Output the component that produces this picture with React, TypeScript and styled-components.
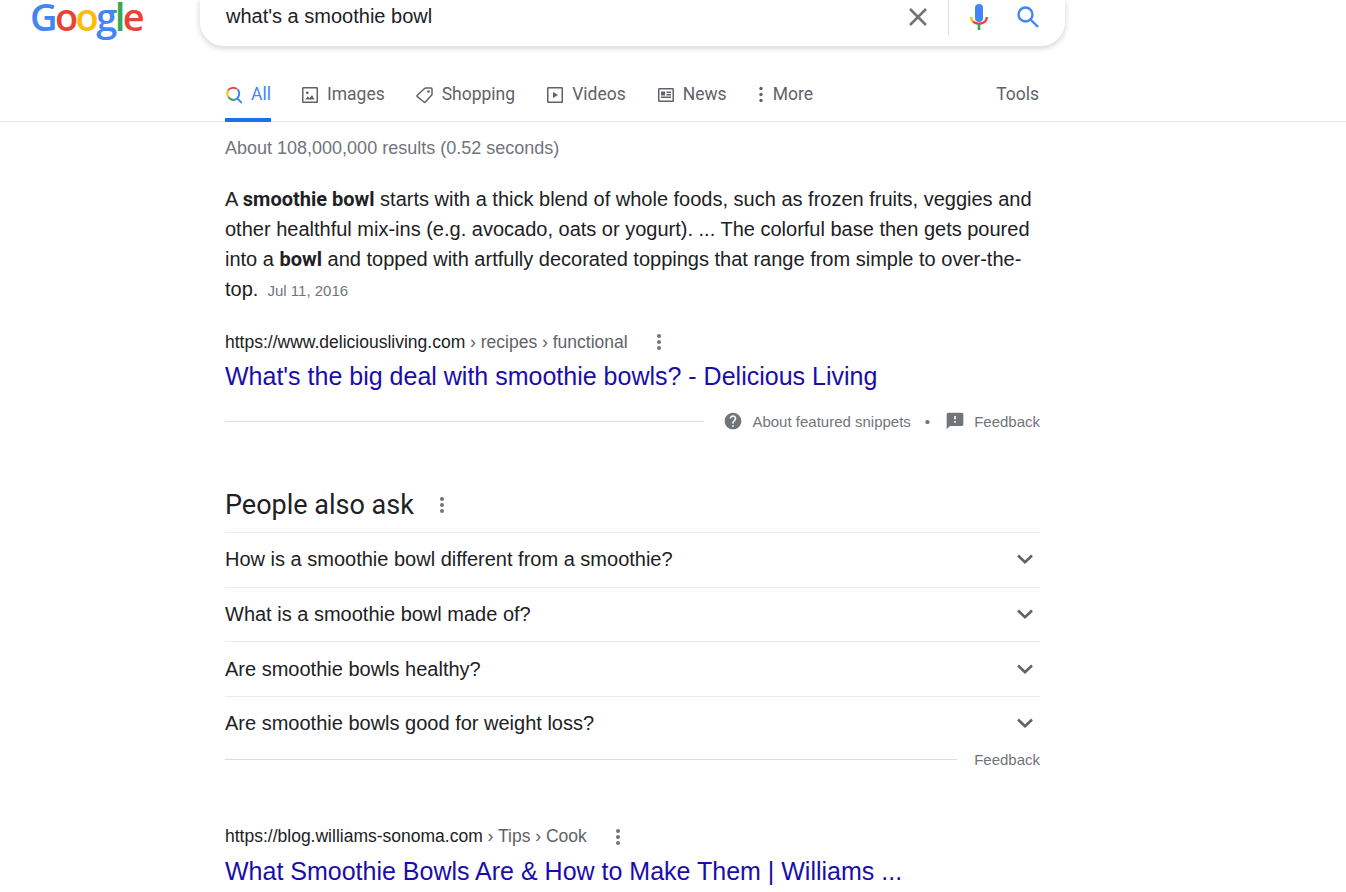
import React from "react";
import styled, { createGlobalStyle } from "styled-components";

const Global = createGlobalStyle`
  html, body { margin: 0; padding: 0; height: 892px; overflow: hidden; background: #fff; }
  body { font-family: "Liberation Sans", Arial, sans-serif; color: #202124; }
  * { box-sizing: border-box; }
`;

const Page = styled.div`
  width: 1346px;
  height: 892px;
  overflow: hidden;
`;

const Header = styled.header`
  display: flex;
  height: 46px;
  align-items: flex-start;
  padding-left: 30px;
`;

const Logo = styled.div`
  width: 170px;
  height: 46px;
  margin-top: -2px;
  font-family: "Open Sans", Lato, sans-serif;
  font-size: 38px;
  line-height: 36px;
  letter-spacing: -2.6px;
  font-weight: 600;
  white-space: nowrap;
`;

const LogoLetter = styled.span<{ $c: string }>`
  color: ${(p) => p.$c};
`;

const SearchBox = styled.div`
  width: 865px;
  height: 46px;
  display: flex;
  align-items: flex-start;
  padding: 0 26px;
  background: #fff;
  border-radius: 0 0 24px 24px;
  box-shadow: 0 2px 5px 1px rgba(64, 60, 67, 0.18);
  clip-path: inset(0 -12px -12px -12px);
`;

const Query = styled.div`
  flex: 1;
  font-size: 20px;
  line-height: 24px;
  padding-top: 4px;
  color: #202124;
`;

const SearchIcons = styled.div`
  display: flex;
  align-items: flex-start;
  height: 35px;
`;

const ClearIcon = styled.svg`
  display: block;
  margin-top: 8px;
`;

const Sep = styled.span`
  width: 1px;
  height: 35px;
  background: #dfe1e5;
  margin: 0 21px 0 21px;
`;

const MicIcon = styled.svg`
  display: block;
  margin-top: 4px;
`;

const LensIcon = styled.svg`
  display: block;
  margin: 6px 0 0 29px;
`;

const TabBar = styled.nav`
  display: flex;
  height: 76px;
  padding: 30px 307px 0 225px;
  border-bottom: 1px solid #ebebeb;
  font-family: Roboto, "Liberation Sans", sans-serif;
  font-size: 17.5px;
  color: #5f6368;
`;

const Tab = styled.div<{ $active?: boolean; $gap?: number; $mr?: number }>`
  display: flex;
  align-items: flex-start;
  gap: ${(p) => p.$gap ?? 8}px;
  height: 46px;
  padding-top: 7px;
  line-height: 22px;
  margin-right: ${(p) => p.$mr ?? 31}px;
  white-space: nowrap;
  color: ${(p) => (p.$active ? "#4285f4" : "#5f6368")};
  border-bottom: 4px solid ${(p) => (p.$active ? "#1a73e8" : "transparent")};
  svg { flex: none; margin-top: 3px; }
`;

const Tools = styled.div`
  margin-left: auto;
  padding-top: 7px;
  line-height: 22px;
`;

const Main = styled.main`
  width: 815px;
  margin-left: 225px;
`;

const Stats = styled.div`
  font-size: 18px;
  line-height: 22px;
  margin-top: 15px;
  color: #70757a;
`;

const Snippet = styled.p`
  margin: 25px 0 0;
  font-size: 20px;
  line-height: 30px;
  color: #202124;
  width: 812px;
  b { font-family: Roboto, "Liberation Sans", sans-serif; font-weight: 700; }
`;

const SnippetDate = styled.span`
  font-size: 15px;
  color: #70757a;
  margin-left: 5px;
`;

const UrlRow = styled.div<{ $top: number }>`
  display: flex;
  align-items: center;
  height: 22px;
  margin-top: ${(p) => p.$top}px;
  font-size: 17.5px;
  color: #5f6368;
  white-space: nowrap;
`;

const Host = styled.span`
  color: #202124;
`;

const More = styled.span<{ $left: number }>`
  display: inline-flex;
  margin-left: ${(p) => p.$left}px;
`;

const ResultTitle = styled.a`
  display: block;
  font-size: 25px;
  line-height: 33px;
  margin-top: 7px;
  color: #1a0dab;
  white-space: nowrap;
`;

const FootRow = styled.div<{ $top: number }>`
  display: flex;
  align-items: center;
  height: 22px;
  margin-top: ${(p) => p.$top}px;
  font-size: 15px;
  color: #70757a;
`;

const FootLine = styled.div`
  flex: 1;
  height: 1px;
  background: #dadce0;
`;

const FootItem = styled.span<{ $left: number }>`
  display: inline-flex;
  align-items: center;
  margin-left: ${(p) => p.$left}px;
`;

const FootIcon = styled.svg<{ $right: number }>`
  display: block;
  margin-right: ${(p) => p.$right}px;
`;

const AskHead = styled.h2`
  display: flex;
  align-items: center;
  height: 36px;
  margin: 54px 0 10px;
  padding-top: 1px;
  font-family: Roboto, "Liberation Sans", sans-serif;
  font-size: 27px;
  font-weight: 400;
  color: #202124;
`;

const AskRow = styled.div`
  display: flex;
  align-items: center;
  justify-content: space-between;
  height: 54.7px;
  border-top: 1px solid #ebebeb;
  font-size: 20px;
  color: #202124;
  padding-right: 7px;
`;

const ChevronIcon = styled.svg`
  display: block;
  margin-top: -1px;
`;

const Chevron = () => (
  <ChevronIcon width="16" height="10" viewBox="0 0 16 10" fill="none" stroke="#5f6368" strokeWidth="2.600">
    <path d="M1 1.500 8 8.200 15 1.500" />
  </ChevronIcon>
);

const Dots = () => (
  <svg width="6" height="18" viewBox="0 0 6 18" fill="#70757a">
    <circle cx="3" cy="3" r="2" />
    <circle cx="3" cy="9" r="2" />
    <circle cx="3" cy="15" r="2" />
  </svg>
);

const rows = [
  "How is a smoothie bowl different from a smoothie?",
  "What is a smoothie bowl made of?",
  "Are smoothie bowls healthy?",
  "Are smoothie bowls good for weight loss?",
];

export default function App() {
  return (
    <Page>
      <Global />
      <Header>
        <Logo aria-label="Google">
          <LogoLetter $c="#4285f4">G</LogoLetter>
          <LogoLetter $c="#ea4335">o</LogoLetter>
          <LogoLetter $c="#fbbc05">o</LogoLetter>
          <LogoLetter $c="#4285f4">g</LogoLetter>
          <LogoLetter $c="#34a853">l</LogoLetter>
          <LogoLetter $c="#ea4335">e</LogoLetter>
        </Logo>
        <SearchBox>
          <Query>what's a smoothie bowl</Query>
          <SearchIcons>
            <ClearIcon width="18" height="18" viewBox="0 0 18 18" stroke="#70757a" strokeWidth="2.600" fill="none">
              <path d="M1 1 17 17M17 1 1 17" />
            </ClearIcon>
            <Sep />
            <MicIcon width="18" height="26" viewBox="0 0 18 26" fill="none">
              <rect x="5" y="0" width="8" height="18" rx="4" fill="#4285f4" />
              <path d="M1.200 13c0 2.200.6 3.700 2 4.900" stroke="#fbbc05" strokeWidth="2.400" />
              <path d="M3 17.700c1.500 1.300 3.600 2 6 2s4.500-.7 6-2c1.300-1.200 1.800-2.700 1.800-4.700" stroke="#ea4335" strokeWidth="2.400" />
              <path d="M9 20v6" stroke="#34a853" strokeWidth="2.600" />
            </MicIcon>
            <LensIcon width="22" height="22" viewBox="0 0 22 22" fill="none" stroke="#4285f4" strokeWidth="2.400">
              <circle cx="8.500" cy="8.500" r="7" />
              <path d="m13.500 13.500 7.500 7.500" />
            </LensIcon>
          </SearchIcons>
        </SearchBox>
      </Header>

      <TabBar>
        <Tab $active $mr={30}>
          <svg width="18" height="18" viewBox="0 0 18 18" fill="none" strokeWidth="1.800">
            <path d="M12 3A6.500 6.500 0 0 0 3 4.500" stroke="#ea4335" />
            <path d="M3.200 4.300a6.500 6.500 0 0 0 0 6.500" stroke="#fbbc05" />
            <path d="M3.200 10.800A6.500 6.500 0 0 0 9 14" stroke="#34a853" />
            <path d="M9 14a6.500 6.500 0 0 0 3.500-10.800" stroke="#4285f4" />
            <path d="m11.800 12 5 5" stroke="#4285f4" />
          </svg>
          All
        </Tab>
        <Tab>
          <svg width="18" height="18" viewBox="0 0 18 18" fill="#5f6368">
            <path d="M15.700 1H2.300C1.600 1 1 1.600 1 2.300v13.400c0 .7.600 1.300 1.300 1.300h13.400c.7 0 1.300-.6 1.300-1.300V2.300C17 1.600 16.400 1 15.700 1zm-.2 14.500h-13v-13h13v13z" />
            <path d="m11 9-2.500 3.200-1.700-2L4.500 13.500h9zM6.300 8.200a1.400 1.400 0 1 0 0-2.800 1.400 1.400 0 0 0 0 2.800z" />
          </svg>
          Images
        </Tab>
        <Tab>
          <svg width="18" height="18" viewBox="0 0 18 18" fill="none" stroke="#5f6368" strokeWidth="1.500" strokeLinejoin="round">
            <path d="M1.300 9.200 8.800 2.300c.3-.2.600-.3.900-.3H15c.6 0 1 .4 1 1v5.300c0 .3-.1.600-.3.800L9.300 16c-.4.400-1 .400-1.400 0L1.300 10.600c-.4-.4-.4-1 0-1.400z" />
            <circle cx="12.500" cy="5.500" r="1.300" fill="#5f6368" stroke="none" />
          </svg>
          Shopping
        </Tab>
        <Tab>
          <svg width="18" height="18" viewBox="0 0 18 18" fill="#5f6368">
            <path d="M2.300 1h13.400c.7 0 1.300.6 1.300 1.300v13.400c0 .7-.6 1.300-1.300 1.300H2.300C1.600 17 1 16.400 1 15.700V2.300C1 1.600 1.600 1 2.300 1zm.2 1.500v13h13v-13h-13z" />
            <path d="M7 6v6l5-3z" />
          </svg>
          Videos
        </Tab>
        <Tab>
          <svg width="18" height="18" viewBox="0 0 18 18" fill="#5f6368">
            <path d="M2.300 2h13.400c.7 0 1.300.6 1.300 1.300v11.400c0 .7-.6 1.300-1.300 1.300H2.300C1.600 16 1 15.400 1 14.700V3.300C1 2.600 1.600 2 2.300 2zm.2 1.500v11h13v-11h-13z" />
            <path d="M4 5.500h4v4H4zM9.500 5.500H14V7H9.500zM9.500 8H14v1.500H9.500zM4 10.500h10V12H4z" />
          </svg>
          News
        </Tab>
        <Tab $gap={9}>
          <svg width="6" height="18" viewBox="0 0 6 18" fill="#5f6368">
            <circle cx="3" cy="2.500" r="1.700" />
            <circle cx="3" cy="8.500" r="1.700" />
            <circle cx="3" cy="14.500" r="1.700" />
          </svg>
          More
        </Tab>
        <Tools>Tools</Tools>
      </TabBar>

      <Main>
        <Stats>About 108,000,000 results (0.52 seconds)</Stats>
        <Snippet>
          A <b>smoothie bowl</b> starts with a thick blend of whole foods, such as frozen fruits, veggies and other
          healthful mix-ins (e.g. avocado, oats or yogurt). ... The colorful base then gets poured into a <b>bowl</b>{" "}
          and topped with artfully decorated toppings that range from simple to over-the-top.
          <SnippetDate> Jul 11, 2016</SnippetDate>
        </Snippet>
        <UrlRow $top={25}>
          <Host>https://www.deliciousliving.com</Host>&nbsp;› recipes › functional
          <More $left={28}><Dots /></More>
        </UrlRow>
        <ResultTitle>What's the big deal with smoothie bowls? - Delicious Living</ResultTitle>
        <FootRow $top={17}>
          <FootLine />
          <FootItem $left={19}>
            <FootIcon $right={9} width="20" height="20" viewBox="0 0 24 24" fill="#70757a">
              <path d="M12 2C6.480 2 2 6.480 2 12s4.480 10 10 10 10-4.480 10-10S17.520 2 12 2zm1 17h-2v-2h2v2zm2.070-7.750-.9.920C13.450 12.900 13 13.500 13 15h-2v-.5c0-1.100.45-2.100 1.170-2.830l1.240-1.260c.37-.36.590-.86.590-1.410 0-1.100-.9-2-2-2s-2 .9-2 2H8c0-2.210 1.790-4 4-4s4 1.790 4 4c0 .88-.36 1.680-.93 2.250z" />
            </FootIcon>
            About featured snippets
          </FootItem>
          <FootItem $left={14}>•</FootItem>
          <FootItem $left={15}>
            <FootIcon $right={9} width="20" height="20" viewBox="0 0 24 24" fill="#70757a">
              <path d="M20 2H4c-1.100 0-2 .9-2 2v18l4-4h14c1.100 0 2-.9 2-2V4c0-1.100-.9-2-2-2zm-7 12h-2v-2h2v2zm0-4h-2V6h2v4z" />
            </FootIcon>
            Feedback
          </FootItem>
        </FootRow>

        <AskHead>
          People also ask
          <More $left={25}><Dots /></More>
        </AskHead>
        {rows.map((r) => (
          <AskRow key={r}>
            {r}
            <Chevron />
          </AskRow>
        ))}
        <FootRow $top={-2}>
          <FootLine />
          <FootItem $left={17}>Feedback</FootItem>
        </FootRow>

        <UrlRow $top={55}>
          <Host>https://blog.williams-sonoma.com</Host>&nbsp;› Tips › Cook
          <More $left={28}><Dots /></More>
        </UrlRow>
        <ResultTitle>What Smoothie Bowls Are &amp; How to Make Them | Williams ...</ResultTitle>
      </Main>
    </Page>
  );
}
